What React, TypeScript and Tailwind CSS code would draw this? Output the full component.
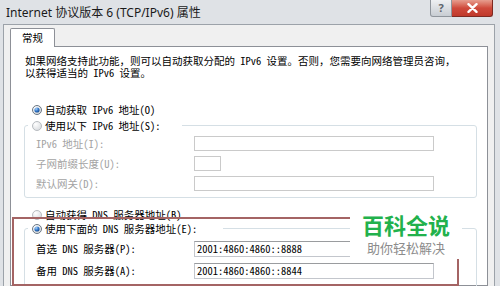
import { useId } from 'react';

function Radio({ checked }: { checked: boolean }) {
  const id = useId();
  return (
    <svg width="10" height="10" viewBox="0 0 10 10" className="shrink-0">
      <defs>
        <radialGradient id={`bg${id}`} cx="0.35" cy="0.3" r="0.8">
          <stop offset="0" stopColor="#ffffff" />
          <stop offset="1" stopColor="#d6d9dd" />
        </radialGradient>
        <radialGradient id={`dot${id}`} cx="0.35" cy="0.3" r="0.8">
          <stop offset="0" stopColor="#a8d2fb" />
          <stop offset="0.55" stopColor="#2f74c8" />
          <stop offset="1" stopColor="#17457e" />
        </radialGradient>
      </defs>
      <circle cx="5" cy="5" r="4.5" fill={`url(#bg${id})`} stroke={checked ? '#6b7784' : '#b8bcc0'} />
      {checked && <circle cx="5" cy="5" r="2.6" fill={`url(#dot${id})`} />}
    </svg>
  );
}

function RadioRow({ checked, label }: { checked: boolean; label: string }) {
  return (
    <div className="flex h-[14px] items-center gap-[3px] text-black">
      <Radio checked={checked} />
      <span>{label}</span>
    </div>
  );
}

function Field({
  label,
  value,
  disabled,
  short,
  tall,
}: {
  label: string;
  value?: string;
  disabled?: boolean;
  short?: boolean;
  tall?: boolean;
}) {
  return (
    <div className="flex items-center">
      <span className={`w-[158px] shrink-0 ${disabled ? 'text-[#a3a3a3]' : 'text-black'}`}>{label}</span>
      <div
        className={`flex items-center bg-white pl-[2px] ${tall ? 'h-[16px]' : 'h-[15px]'} ${short ? 'w-[27px]' : 'w-[240px]'} ${
          disabled
            ? 'border border-[#cacaca]'
            : 'border border-[#c3c6cc] border-t-[#9a9c9f]'
        }`}
      >
        {value}
      </div>
    </div>
  );
}

export default function App() {
  return (
    <div className="relative h-[286px] w-[500px] overflow-hidden bg-[#dfe2e6] font-['Noto_Sans_Mono_CJK_SC','Liberation_Mono','Noto_Sans_CJK_SC',monospace] text-[10.5px] leading-[12px]">
      {/* Title bar */}
      <div className="flex h-[24px] pl-[6px] pr-[7px]">
        <span className="pt-[6px] font-['Noto_Sans','Noto_Sans_CJK_SC',sans-serif] text-[12px] leading-[14px] text-[#1a1a1a]">
          Internet 协议版本 6 (TCP/IPv6) 属性
        </span>
        <div className="ml-auto flex h-[17px]">
          <div className="flex w-[22px] items-center justify-center rounded-bl-[3px] border border-t-0 border-[#8f959c] bg-gradient-to-b from-[#eef0f2] to-[#c8cdd3] font-['Noto_Sans',sans-serif] text-[11px] font-bold text-[#5d646c]">
            ?
          </div>
          <div className="flex w-[41px] items-center justify-center rounded-br-[3px] border border-t-0 border-l-0 border-[#7e2a22] bg-gradient-to-b from-[#e69d8f] via-[#cf4a3c] to-[#c0392b] text-white">
            <svg width="11" height="10" viewBox="0 0 11 10">
              <path d="M1.5 1.2 L9.5 8.8 M9.5 1.2 L1.5 8.8" stroke="#ffffff" strokeWidth="2.4" strokeLinecap="round" />
            </svg>
          </div>
        </div>
      </div>

      {/* Client area */}
      <div className="ml-[3px] mr-[5px] h-[262px] border border-b-0 border-[#9ca2a9] bg-[#f0f0f0] pl-[6px] pr-[6px] pt-[3px]">
        {/* Tab */}
        <div className="relative z-10 -mb-px flex h-[19px] w-[45px] items-center justify-center rounded-t-[2px] border border-b-0 border-[#8d9097] bg-white text-black">
          常规
        </div>

        {/* Tab panel */}
        <div className="h-[240px] border border-[#8d9097] bg-white pl-[13px] pr-[10px] pt-[8px]">
          <p className="ml-[1px] text-black">
            如果网络支持此功能，则可以自动获取分配的 IPv6 设置。否则，您需要向网络管理员咨询，
            <br />
            以获得适当的 IPv6 设置。
          </p>

          <div className="ml-[8px] mt-[24px]">
            <RadioRow checked label="自动获取 IPv6 地址(O)" />
          </div>

          <div className="mt-[8px] rounded-[3px] border border-[#d5dfe5] pb-[6px] pl-[11px]">
            <div className="-ml-[8px] -mt-[7px] w-fit bg-white pl-[4px] pr-[21px]">
              <RadioRow checked={false} label="使用以下 IPv6 地址(S):" />
            </div>
            <div className="mt-[3px] flex flex-col gap-[5px]">
              <Field disabled label="IPv6 地址(I):" />
              <Field disabled short label="子网前缀长度(U):" />
              <Field disabled label="默认网关(D):" />
            </div>
          </div>

          <div className="ml-[8px] mt-[10px]">
            <RadioRow checked={false} label="自动获得 DNS 服务器地址(B)" />
          </div>

          <div className="mt-[6px] h-[80px] rounded-[3px] border border-[#d5dfe5] pl-[11px]">
            <div className="-ml-[8px] -mt-[7px] w-fit bg-white pl-[4px] pr-[26px]">
              <RadioRow checked label="使用下面的 DNS 服务器地址(E):" />
            </div>
            <div className="mt-[5px] flex flex-col gap-[6px]">
              <Field tall label="首选 DNS 服务器(P):" value="2001:4860:4860::8888" />
              <Field tall label="备用 DNS 服务器(A):" value="2001:4860:4860::8844" />
            </div>
          </div>
        </div>
      </div>

      {/* Highlight frame */}
      <div className="absolute left-[12px] top-[217px] h-[69px] w-[447px] border-2 border-[#a46464]" />

      {/* Watermark */}
      <div className="absolute left-[350px] top-[205px] flex h-[54px] w-[112px] flex-col items-center bg-white pt-[6px] font-['Noto_Sans_CJK_SC',sans-serif]">
        <span className="text-[22px] font-bold leading-[26px] text-[#22b14c]">百科全说</span>
        <span className="mt-[3px] text-[13px] leading-[16px] text-[#8c8c8c]">助你轻松解决</span>
      </div>
    </div>
  );
}
